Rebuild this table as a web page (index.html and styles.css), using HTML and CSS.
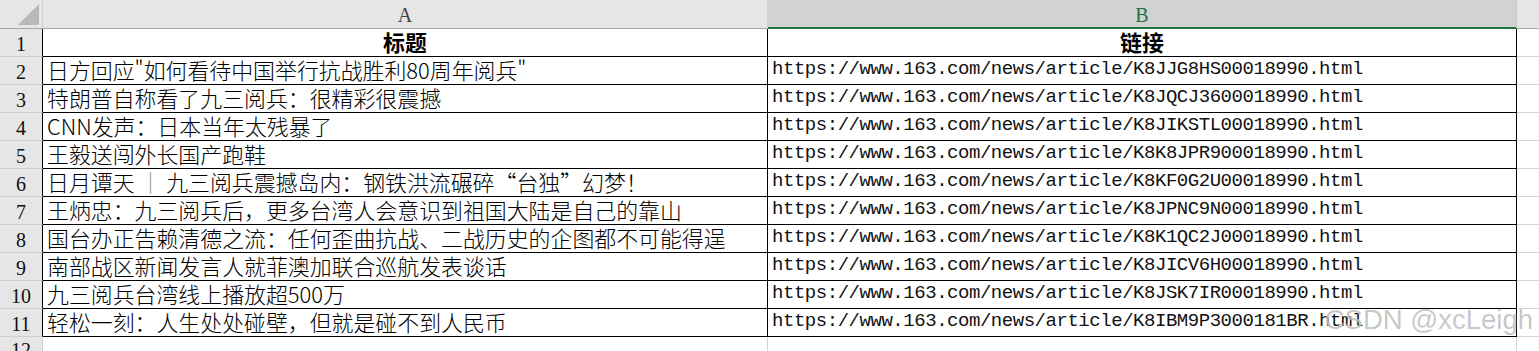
FILE: index.html
```html
<!DOCTYPE html>
<html lang="zh-CN">
<head>
<meta charset="utf-8">
<title>Sheet</title>
<link rel="stylesheet" href="styles.css">
</head>
<body>
<div class="sheet">
  <div class="corner"><svg class="tri" width="21" height="21" viewBox="0 0 21 21"><polygon points="0,21 21,21 21,0" fill="#b9b9b9"/></svg></div>
  <div class="colhead colhead-a">A</div>
  <div class="colhead colhead-b">B</div>
  <div class="colhead colhead-c"></div>

  <div class="rowhead">1</div>
  <div class="cell cell-a title">标题</div>
  <div class="cell cell-b title">链接</div>
  <div class="cell-c"></div>

  <div class="rowhead">2</div>
  <div class="cell cell-a">日方回应"如何看待中国举行抗战胜利80周年阅兵"</div>
  <div class="cell cell-b url">https://www.163.com/news/article/K8JJG8HS00018990.html</div>
  <div class="cell-c"></div>

  <div class="rowhead">3</div>
  <div class="cell cell-a">特朗普自称看了九三阅兵：很精彩很震撼</div>
  <div class="cell cell-b url">https://www.163.com/news/article/K8JQCJ3600018990.html</div>
  <div class="cell-c"></div>

  <div class="rowhead">4</div>
  <div class="cell cell-a">CNN发声：日本当年太残暴了</div>
  <div class="cell cell-b url">https://www.163.com/news/article/K8JIKSTL00018990.html</div>
  <div class="cell-c"></div>

  <div class="rowhead">5</div>
  <div class="cell cell-a">王毅送闯外长国产跑鞋</div>
  <div class="cell cell-b url">https://www.163.com/news/article/K8K8JPR900018990.html</div>
  <div class="cell-c"></div>

  <div class="rowhead">6</div>
  <div class="cell cell-a">日月谭天 <span class="bar">｜</span> 九三阅兵震撼岛内：钢铁洪流碾碎“台独”幻梦！</div>
  <div class="cell cell-b url">https://www.163.com/news/article/K8KF0G2U00018990.html</div>
  <div class="cell-c"></div>

  <div class="rowhead">7</div>
  <div class="cell cell-a">王炳忠：九三阅兵后，更多台湾人会意识到祖国大陆是自己的靠山</div>
  <div class="cell cell-b url">https://www.163.com/news/article/K8JPNC9N00018990.html</div>
  <div class="cell-c"></div>

  <div class="rowhead">8</div>
  <div class="cell cell-a">国台办正告赖清德之流：任何歪曲抗战、二战历史的企图都不可能得逞</div>
  <div class="cell cell-b url">https://www.163.com/news/article/K8K1QC2J00018990.html</div>
  <div class="cell-c"></div>

  <div class="rowhead">9</div>
  <div class="cell cell-a">南部战区新闻发言人就菲澳加联合巡航发表谈话</div>
  <div class="cell cell-b url">https://www.163.com/news/article/K8JICV6H00018990.html</div>
  <div class="cell-c"></div>

  <div class="rowhead">10</div>
  <div class="cell cell-a">九三阅兵台湾线上播放超500万</div>
  <div class="cell cell-b url">https://www.163.com/news/article/K8JSK7IR00018990.html</div>
  <div class="cell-c"></div>

  <div class="rowhead">11</div>
  <div class="cell cell-a">轻松一刻：人生处处碰壁，但就是碰不到人民币</div>
  <div class="cell cell-b url">https://www.163.com/news/article/K8IBM9P3000181BR.html</div>
  <div class="cell-c"></div>

  <div class="rowhead rowhead-last">12</div>
  <div class="empty"></div>
  <div class="empty"></div>
  <div class="empty-c"></div>

  <div class="watermark">CSDN @xcLeigh</div>
</div>
</body>
</html>
```

FILE: styles.css
```css
html, body {
  margin: 0;
  padding: 0;
  background: #ffffff;
  overflow: hidden;
}

.sheet {
  position: relative;
  display: grid;
  grid-template-columns: 43px 725px 749px 1fr;
  grid-template-rows: 29px 28px repeat(10, 28px) 14px;
  width: 1539px;
  height: 351px;
  overflow: hidden;
  font-family: "Noto Sans CJK SC", sans-serif;
}

.corner {
  background: #e6e6e6;
  border-right: 1px solid #cfcfcf;
  border-bottom: 1px solid #a6a6a6;
  display: flex;
  align-items: flex-end;
  justify-content: flex-end;
  padding: 0 3px 3px 0;
}

.colhead {
  background: #e6e6e6;
  border-bottom: 1px solid #a6a6a6;
  border-right: 1px solid #cfcfcf;
  display: flex;
  align-items: center;
  justify-content: center;
  font-family: "Liberation Serif", serif;
  font-size: 20px;
  line-height: 22px;
  color: #444444;
  padding-top: 2px;
}

.colhead-b {
  background: #d2d2d2;
  color: #217346;
  border-bottom: 2px solid #217346;
  border-right: 1px solid #c4c4c4;
}

.colhead-c {
  border-right: none;
}

.rowhead {
  background: #e6e6e6;
  border-right: 1px solid #000000;
  border-bottom: 1px solid #cfcfcf;
  display: flex;
  align-items: center;
  justify-content: center;
  font-family: "Liberation Serif", serif;
  font-size: 20px;
  line-height: 22px;
  color: #111111;
  padding-top: 2px;
}

.rowhead-last {
  border-right: 1px solid #cfcfcf;
  border-bottom: none;
  align-items: flex-start;
}

.cell {
  border-right: 1px solid #000000;
  border-bottom: 1px solid #000000;
  padding: 0 0 0 4px;
  font-size: 21.9px;
  font-weight: 300;
  line-height: 26px;
  color: #000000;
  white-space: pre;
}

.title {
  text-align: center;
  font-weight: bold;
  padding-left: 0;
}

.url {
  font-family: "Liberation Mono", monospace;
  font-weight: normal;
  font-size: 19px;
  letter-spacing: -0.46px;
  line-height: 24px;
  color: #111111;
}

.bar {
  color: #8a8a8a;
}

.cell-c {
  border-bottom: 1px solid #d4d4d4;
}

.empty {
  border-right: 1px solid #d4d4d4;
}

.empty-c {
}

.watermark {
  position: absolute;
  right: 6px;
  top: 304px;
  font-family: "Liberation Sans", sans-serif;
  font-size: 27.5px;
  color: rgba(120, 120, 120, 0.42);
  text-shadow: 0 0 1px rgba(255, 255, 255, 0.8);
  white-space: nowrap;
  pointer-events: none;
}
```
